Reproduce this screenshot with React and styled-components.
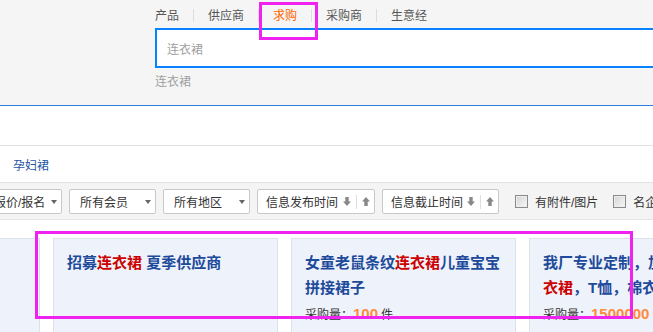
import React from "react"
import styled, { createGlobalStyle } from "styled-components"

const Global = createGlobalStyle`
  html, body {
    margin: 0;
    padding: 0;
    background: #fff;
  }
  body {
    font-family: "Liberation Sans", "Noto Sans CJK SC", sans-serif;
    font-size: 12px;
    color: #333;
  }
`

const Page = styled.div`
  position: relative;
  width: 653px;
  height: 332px;
  overflow: hidden;
  background: #fff;
`

const Header = styled.div`
  height: 105px;
  background: #f5f5f5;
  border-bottom: 1px solid #2c7be0;
  padding-left: 155px;
`

const Tabs = styled.div`
  display: flex;
  align-items: center;
  height: 28px;
  padding-top: 3px;
  box-sizing: border-box;
`

const Tab = styled.span`
  display: flex;
  align-items: center;
  padding: 0 14px;
  color: ${p => (p.active ? "#ff6600" : "#555")};
  line-height: 16px;
  &:first-child {
    padding-left: 0;
  }
`

const TabSep = styled.span`
  width: 1px;
  height: 13px;
  background: #dcdcdc;
`

const SearchBox = styled.div`
  width: 580px;
  height: 40px;
  border: 2px solid #0a82ff;
  box-sizing: border-box;
  background: #fff;
  display: flex;
  align-items: center;
  padding-left: 10px;
  color: #a0a0a0;
`

const Suggest = styled.div`
  margin-top: 6px;
  line-height: 16px;
  color: #a0a0a0;
`

const Blank = styled.div`
  height: 39px;
  border-bottom: 1px solid #e2e2e2;
`

const CatRow = styled.div`
  height: 36px;
  display: flex;
  align-items: center;
  padding-left: 13px;
  border-bottom: 1px solid #e2e2e2;
`

const CatLink = styled.a`
  color: #2456a4;
  text-decoration: none;
`

const FilterBar = styled.div`
  height: 37px;
  background: #f4f4f4;
  border-bottom: 1px solid #e4e4e4;
  display: flex;
  align-items: center;
  gap: 7px;
  margin-left: -17px;
  padding-top: 1px;
  box-sizing: border-box;
`

const Select = styled.div`
  width: ${p => p.w}px;
  height: 25px;
  box-sizing: border-box;
  border: 1px solid #c9c9c9;
  border-radius: 2px;
  background: #fff;
  display: flex;
  align-items: center;
  justify-content: space-between;
  padding: 0 4px 0 ${p => p.pl || 10}px;
  flex-shrink: 0;
  color: #333;
  white-space: nowrap;
`

const Caret = styled.span`
  width: 0;
  height: 0;
  border-left: 3.5px solid transparent;
  border-right: 3.5px solid transparent;
  border-top: 4px solid #666;
`

const SortGroup = styled.span`
  display: flex;
  align-items: center;
  gap: 5px;
`

const SortSep = styled.span`
  width: 1px;
  height: 14px;
  background: #dedede;
`

const Check = styled.label`
  display: flex;
  align-items: center;
  gap: 7px;
  margin-left: ${p => p.ml}px;
  white-space: nowrap;
  flex-shrink: 0;
  color: #333;
`

const Box = styled.span`
  width: 11px;
  height: 11px;
  border: 1px solid #8a8a8a;
  background: linear-gradient(135deg, #d4d4d4, #f8f8f8);
  box-shadow: inset 0 0 0 1px #eee;
`

const Cards = styled.div`
  display: flex;
  gap: 13px;
  padding-top: 18px;
  margin-left: -185px;
`

const Card = styled.div`
  width: 225px;
  height: 130px;
  flex-shrink: 0;
  box-sizing: border-box;
  border: 1px solid #dde1ea;
  background: #eef2fa;
  padding: 11px 13px 0;
`

const Title = styled.div`
  font-size: 15px;
  font-weight: bold;
  line-height: 25px;
  color: #1d4a9a;
  word-break: break-all;
`

const Hit = styled.span`
  color: #cc0000;
`

const Qty = styled.div`
  margin-top: 5px;
  line-height: 18px;
  color: #333;
  white-space: nowrap;
`

const Num = styled.span`
  color: #ff8a3d;
  font-weight: bold;
  font-size: 15px;
  margin-right: 3px;
`

const Mark = styled.div`
  position: absolute;
  left: ${p => p.x}px;
  top: ${p => p.y}px;
  width: ${p => p.w}px;
  height: ${p => p.h}px;
  box-sizing: border-box;
  border: 3px solid #f022f0;
  pointer-events: none;
`

function Arrow({ up }) {
  return (
    <svg width="8" height="9" viewBox="0 0 8 9">
      {up ? (
        <path d="M4 0 L8 4.5 L5.7 4.5 L5.7 9 L2.3 9 L2.3 4.5 L0 4.5 Z" fill="#888" />
      ) : (
        <path d="M2.3 0 L5.7 0 L5.7 4.5 L8 4.5 L4 9 L0 4.5 L2.3 4.5 Z" fill="#888" />
      )}
    </svg>
  )
}

const tabs = ["产品", "供应商", "求购", "采购商", "生意经"]

const cards = [
  { title: [["", "诚招各地区域代理商家"]] },
  { title: [["", "招募"], ["hit", "连衣裙"], ["", " 夏季供应商"]] },
  {
    title: [["", "女童老鼠条纹"], ["hit", "连衣裙"], ["", "儿童宝宝拼接裙子"]],
    qty: "100",
  },
  {
    title: [["", "我厂专业定制，加工各款式"], ["hit", "连衣裙"], ["", "，T恤，棉衣等"]],
    qty: "1500000",
  },
]

export default function App() {
  return (
    <Page>
      <Global />
      <Header>
        <Tabs>
          {tabs.map((t, i) => (
            <React.Fragment key={t}>
              {i > 0 && <TabSep />}
              <Tab active={t === "求购"}>{t}</Tab>
            </React.Fragment>
          ))}
        </Tabs>
        <SearchBox>连衣裙</SearchBox>
        <Suggest>连衣裙</Suggest>
      </Header>

      <Blank />

      <CatRow>
        <CatLink href="#">孕妇裙</CatLink>
      </CatRow>

      <FilterBar>
        <Select w={79} pl={10}>
          报价/报名 <Caret />
        </Select>
        <Select w={87} pl={10}>
          所有会员 <Caret />
        </Select>
        <Select w={87} pl={10}>
          所有地区 <Caret />
        </Select>
        <Select w={118} pl={8}>
          信息发布时间
          <SortGroup>
            <Arrow />
            <SortSep />
            <Arrow up />
          </SortGroup>
        </Select>
        <Select w={117} pl={8}>
          信息截止时间
          <SortGroup>
            <Arrow />
            <SortSep />
            <Arrow up />
          </SortGroup>
        </Select>
        <Check ml={9}>
          <Box /> 有附件/图片
        </Check>
        <Check ml={8}>
          <Box /> 名企采购
        </Check>
      </FilterBar>

      <Cards>
        {cards.map((c, i) => (
          <Card key={i}>
            <Title>
              {c.title.map(([k, s], j) =>
                k === "hit" ? <Hit key={j}>{s}</Hit> : <span key={j}>{s}</span>
              )}
            </Title>
            {c.qty && (
              <Qty>
                采购量：<Num>{c.qty}</Num>件
              </Qty>
            )}
          </Card>
        ))}
      </Cards>

      <Mark x={259} y={2} w={59} h={38} />
      <Mark x={35} y={231} w={598} h={88} />
    </Page>
  )
}
